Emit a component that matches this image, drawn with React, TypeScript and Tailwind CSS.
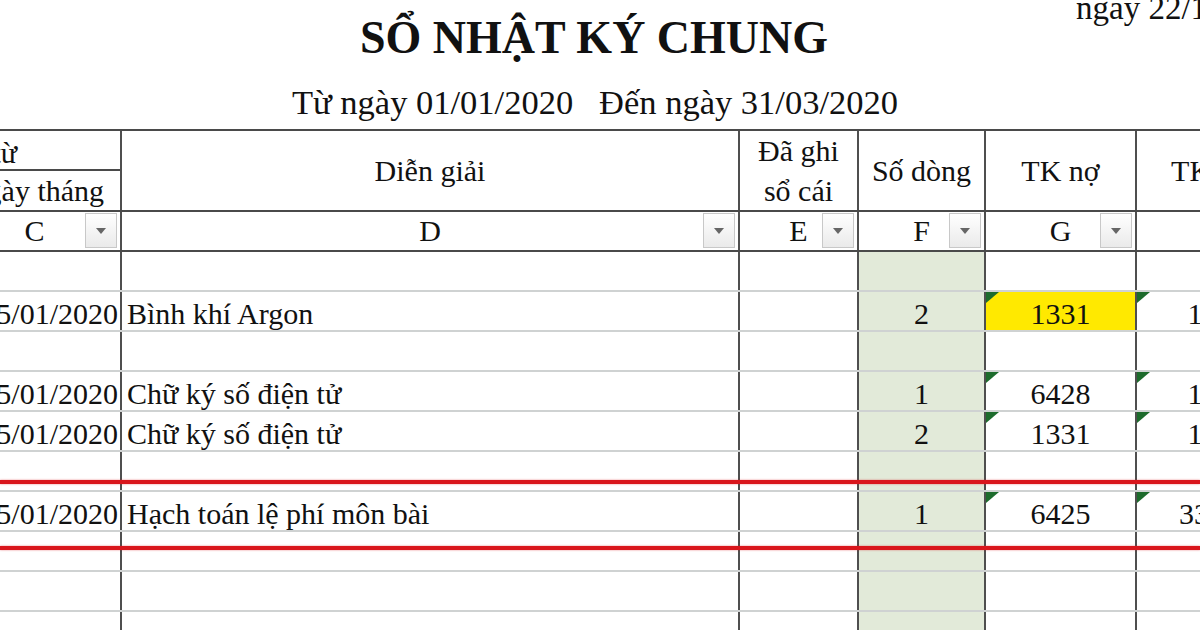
import React from "react";

type Row = {
  c?: string;
  d?: string;
  f?: string;
  g?: string;
  h?: string;
  hl?: boolean;
};

const rows: Row[] = [
  {},
  { c: "05/01/2020", d: "Bình khí Argon", f: "2", g: "1331", h: "111", hl: true },
  {},
  { c: "05/01/2020", d: "Chữ ký số điện tử", f: "1", g: "6428", h: "111" },
  { c: "05/01/2020", d: "Chữ ký số điện tử", f: "2", g: "1331", h: "111" },
  {},
  { c: "05/01/2020", d: "Hạch toán lệ phí môn bài", f: "1", g: "6425", h: "3338" },
  {},
  {},
  {},
];

const FilterBtn = () => (
  <div className="absolute right-[3px] top-[1px] flex h-[35px] w-[32px] items-center justify-center border border-[#c8c8c8] bg-linear-to-b from-white to-[#eaeaea]">
    <svg width="10" height="6" viewBox="0 0 10 6">
      <path d="M0 0h10L5 6z" fill="#666" />
    </svg>
  </div>
);

// small green "number stored as text" marker in the corner
const Marker = () => (
  <svg className="absolute left-0 top-0" width="13" height="11" viewBox="0 0 13 11">
    <path d="M0 0h13L0 11z" fill="#1d6b2c" />
  </svg>
);

const vline = "h-full border-r-2 border-r-[#4f4f4f]";

const App = () => {
  return (
    <div className="relative h-[630px] w-[1200px] overflow-hidden bg-white font-['Liberation_Serif',serif] text-[#111]">
      {/* title block */}
      <div className="flex h-[129px] flex-col">
        <div className="-mt-[10px] h-[36px] whitespace-nowrap pl-[1076px] text-[33px] leading-[36px]">
          ngày 22/10/2020
        </div>
        <div className="-mt-[15px] pr-[12px] text-center text-[46px] font-bold leading-[54px]">
          SỔ NHẬT KÝ CHUNG
        </div>
        <div className="mt-[18px] whitespace-pre pr-[10px] text-center text-[34.5px] leading-[38px]">
          Từ ngày 01/01/2020   Đến ngày 31/03/2020
        </div>
      </div>

      {/* table */}
      <div className="-ml-[51px] w-[1334px] border-t-2 border-t-[#4a4a4a] text-[30px]">
        {/* header */}
        <div className="flex h-[81px] border-b-2 border-b-[#4a4a4a]">
          <div className={`flex w-[173px] flex-col ${vline}`}>
            <div className="flex h-[40px] items-end justify-end whitespace-nowrap border-b-2 border-b-[#4a4a4a] pr-[103px] leading-[32px]">
              Chứng từ
            </div>
            <div className="flex flex-1 items-center justify-center whitespace-nowrap leading-[34px]">
              Ngày tháng
            </div>
          </div>
          <div className={`flex w-[618px] items-center justify-center leading-[34px] ${vline}`}>Diễn giải</div>
          <div className={`flex w-[119px] flex-col items-center justify-center text-center leading-[40px] ${vline}`}>
            <span>Đã ghi</span>
            <span>sổ cái</span>
          </div>
          <div className={`flex w-[127px] items-center justify-center whitespace-nowrap leading-[34px] ${vline}`}>Số dòng</div>
          <div className={`flex w-[151px] items-center justify-center leading-[34px] ${vline}`}>TK nợ</div>
          <div className={`flex w-[146px] items-center justify-center whitespace-nowrap leading-[34px] ${vline}`}>TK có</div>
        </div>

        {/* column letters */}
        <div className="flex h-[40px] border-b-2 border-b-[#4a4a4a] leading-[34px]">
          <div className={`relative flex w-[173px] items-center justify-center ${vline}`}>
            C
            <FilterBtn />
          </div>
          <div className={`relative flex w-[618px] items-center justify-center ${vline}`}>
            D
            <FilterBtn />
          </div>
          <div className={`relative flex w-[119px] items-center justify-center ${vline}`}>
            E
            <FilterBtn />
          </div>
          <div className={`relative flex w-[127px] items-center justify-center ${vline}`}>
            F
            <FilterBtn />
          </div>
          <div className={`relative flex w-[151px] items-center justify-center ${vline}`}>
            G
            <FilterBtn />
          </div>
          <div className={`w-[146px] ${vline}`} />
        </div>

        {/* data rows */}
        {rows.map((r, i) => (
          <div key={i} className="flex h-[40px] border-b-2 border-b-[#cfd2d2] leading-[32px]">
            <div className={`flex w-[173px] items-end justify-end whitespace-nowrap pr-[2px] ${vline}`}>{r.c}</div>
            <div className={`flex w-[618px] items-end whitespace-nowrap pl-[5px] ${vline}`}>{r.d}</div>
            <div className={`w-[119px] ${vline}`} />
            <div className={`flex w-[127px] items-end justify-center bg-[#e2ead9] ${vline}`}>{r.f}</div>
            <div
              className={`relative flex w-[151px] items-end justify-center ${r.hl ? "bg-[#ffe900]" : ""} ${vline}`}
            >
              {r.g && <Marker />}
              {r.g}
            </div>
            <div className={`relative flex w-[146px] items-end justify-center ${vline}`}>
              {r.h && <Marker />}
              {r.h}
            </div>
          </div>
        ))}
      </div>

      {/* red highlight lines drawn over the sheet */}
      <div className="absolute left-0 top-[480px] h-[4px] w-full bg-[#d9161c] shadow-[0_0_2px_rgba(217,22,28,0.6)]" />
      <div className="absolute left-0 top-[546px] h-[4px] w-full bg-[#d9161c] shadow-[0_0_2px_rgba(217,22,28,0.6)]" />
    </div>
  );
};

export default App;
